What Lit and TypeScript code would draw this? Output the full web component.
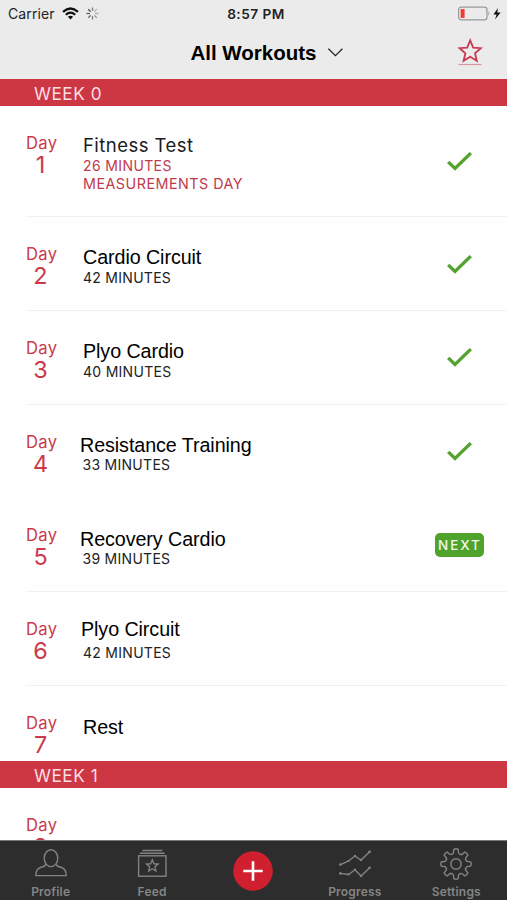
import { LitElement, html, css, svg, nothing } from "lit";
import { customElement, property } from "lit/decorators.js";
import { classMap } from "lit/directives/class-map.js";

type Workout = { day: number; title: string; lines: string[]; kind?: string; state?: "done" | "next" };

const WEEK_0: Workout[] = [
  { day: 1, title: "Fitness Test", lines: ["26 MINUTES", "MEASUREMENTS DAY"], kind: "test", state: "done" },
  { day: 2, title: "Cardio Circuit", lines: ["42 MINUTES"], state: "done" },
  { day: 3, title: "Plyo Cardio", lines: ["40 MINUTES"], state: "done" },
  { day: 4, title: "Resistance Training", lines: ["33 MINUTES"], kind: "wide", state: "done" },
  { day: 5, title: "Recovery Cardio", lines: ["39 MINUTES"], kind: "wide", state: "next" },
  { day: 6, title: "Plyo Circuit", lines: ["42 MINUTES"], kind: "high" },
  { day: 7, title: "Rest", lines: [], kind: "rest" },
];

const STAR = "M12 1.8 L15 9 L22.6 9.6 L16.8 14.6 L18.6 22.2 L12 18.1 L5.4 22.2 L7.2 14.6 L1.4 9.6 L9 9 Z";

function gearPath(): string {
  const pts: string[] = [];
  const teeth = 8;
  for (let i = 0; i < teeth; i++) {
    const a = (i * 2 * Math.PI) / teeth - Math.PI / 2;
    const at = (r: number, d: number) => `${(16 + r * Math.cos(a + d)).toFixed(2)} ${(16 + r * Math.sin(a + d)).toFixed(2)}`;
    pts.push(`${i ? "L" : "M"}${at(11.6, -0.22)} L${at(14.8, -0.15)} Q${at(15.8, 0)} ${at(14.8, 0.15)} L${at(11.6, 0.22)} Q${at(9.6, 0.393)} ${at(11.6, 0.565)}`);
  }
  return pts.join(" ") + "Z";
}

@customElement("workout-row")
class WorkoutRow extends LitElement {
  @property({ attribute: false }) item!: Workout;

  static styles = css`
    :host { display: block; height: 93.7px; flex: none; }
    .row { display: grid; grid-template-columns: 31px 1fr 96px; column-gap: 26px; height: 100%; margin-left: 26px; box-sizing: border-box; border-bottom: 1px solid #f1f1f1; }
    .row.plain { border-bottom-color: transparent; }
    .day { display: flex; flex-direction: column; align-items: center; padding-top: 27px; color: #cb3a4b; }
    .word { font-size: 16.6px; line-height: 20px; letter-spacing: 0.3px; margin-right: -0.3px; }
    .num { font-size: 23.4px; line-height: 24px; margin-left: -2px; }
    .body { padding-top: 29px; color: #222; white-space: nowrap; }
    .title { font-family: "Liberation Sans", Arial, sans-serif; font-size: 19.7px; letter-spacing: -0.07px; line-height: 22px; color: #000; }
    .line { font-size: 14px; line-height: 18px; letter-spacing: 0.28px; }
    .normal .title { margin-bottom: 0.7px; }
    .wide .title { margin-left: -3px; }
    .wide .body { padding-top: 29.4px; }
    .wide .line { margin-left: -0.5px; }
    .high .body { padding-top: 26px; }
    .high .title { margin: 0 0 4px -2px; }
    .rest .body { padding-top: 30px; }
    .test .body { padding-top: 28.3px; }
    .test .title { font-family: Inter, sans-serif; font-size: 18.5px; letter-spacing: 0.45px; margin-bottom: 1px; color: #1c1c1c; }
    .test .line { color: #c03a4d; letter-spacing: 0.38px; }
    .test .line + .line { font-size: 14.3px; letter-spacing: 0.5px; }
    .state { display: flex; align-items: center; justify-content: center; }
    .check { width: 27px; height: 22px; }
    .next { width: 49px; height: 24px; border-radius: 5px; background: #4fa32b; color: #f0f8ec; font-size: 13.5px; font-weight: 500; line-height: 24px; text-align: center; letter-spacing: 1.9px; text-indent: 1.9px; }
  `;

  render() {
    const w = this.item;
    return html`<div class=${classMap({ row: true, plain: w.day === 4 || w.day === 7, [w.kind ?? "normal"]: true })}>
      <div class="day"><span class="word">Day</span><span class="num">${w.day}</span></div>
      <div class="body">
        <div class="title">${w.title}</div>
        ${w.lines.map((l) => html`<div class="line">${l}</div>`)}
      </div>
      <div class="state">
        ${w.state === "done"
          ? html`<svg class="check" viewBox="0 0 27 22"><path d="M2.2 11.9 L9 18.5 L24.8 3.1" fill="none" stroke="#55a32f" stroke-width="3.4"/></svg>`
          : w.state === "next" ? html`<span class="next">NEXT</span>` : nothing}
      </div>
    </div>`;
  }
}

@customElement("app-root")
class AppRoot extends LitElement {
  static styles = css`
    :host { display: flex; flex-direction: column; width: 507px; height: 900px; overflow: hidden; background: #fefefe; font-family: Inter, sans-serif; }
    .status { display: grid; grid-template-columns: 1fr auto 1fr; align-items: center; height: 27px; padding: 0 5px 0 8px; background: #ebebeb; color: #222; font-size: 14px; flex: none; }
    .left { display: flex; align-items: center; gap: 7px; }
    .carrier { letter-spacing: 0.1px; }
    .wifi { width: 17px; height: 13px; }
    .spin { width: 13px; height: 13px; }
    .time { font-weight: 600; font-size: 13.7px; letter-spacing: 0.45px; margin-left: 2px; }
    .right { display: flex; align-items: center; justify-content: flex-end; }
    .battery { width: 45px; height: 16px; }
    .nav { display: grid; grid-template-columns: 1fr auto 1fr; align-items: center; height: 51.5px; background: #ebebeb; flex: none; }
    .name { display: flex; align-items: center; gap: 11px; grid-column: 2; padding-left: 27px; }
    .label { font-family: "Liberation Sans", Arial, sans-serif; font-size: 20.5px; font-weight: 700; color: #000; }
    .chev { width: 16px; height: 10px; }
    .fav { justify-self: end; width: 26px; height: 30px; margin-right: 24px; }
    .week { height: 27px; line-height: 29px; padding-left: 34px; background: #cd3744; color: #fbdfe2; font-size: 17.2px; letter-spacing: 0.55px; flex: none; }
    .list { flex: 1; min-height: 0; overflow: hidden; display: flex; flex-direction: column; }
    .first { height: 111.7px; }
    .last { height: 75.3px; overflow: hidden; }
    .tabs { display: grid; grid-template-columns: repeat(5, 1fr); height: 60px; background: #2d2d2d; border-top: 1px solid #777; box-sizing: border-box; flex: none; }
    .tab { display: flex; flex-direction: column; align-items: center; color: #858585; font-size: 12px; font-weight: 600; letter-spacing: 0.2px; line-height: 14px; padding-top: 7px; }
    .tab svg { width: 32px; height: 32px; margin-bottom: 5px; fill: none; stroke: #838383; stroke-width: 1.4; }
    .tab .plus { width: 40px; height: 40px; margin-top: 3px; }
  `;

  render() {
    return html`
      <div class="status">
        <div class="left"><span class="carrier">Carrier</span>
          <svg class="wifi" viewBox="0 0 17 13" fill="none" stroke="#111" stroke-width="2.2"><path d="M1 4.8 Q8.5 -1.8 16 4.8"/><path d="M3.8 7.8 Q8.5 3.6 13.2 7.8"/><path d="M8.5 12.4 L5.9 9.8 Q8.5 7.6 11.1 9.8 Z" fill="#111" stroke="none"/></svg>
          <svg class="spin" viewBox="-6.5 -6.5 13 13" stroke-width="1.3">${[0, 1, 2, 3, 4, 5, 6, 7].map((i) => svg`<path d="M0 -2.6V-6" transform="rotate(${i * 45})" stroke="#333" opacity=${[0.6, 0.3, 0.35, 0.45, 0.6, 0.7, 0.8, 0.9][i]}/>`)}</svg>
        </div>
        <span class="time">8:57 PM</span>
        <div class="right"><svg class="battery" viewBox="0 0 45 16"><rect x="1.6" y="1.1" width="28.4" height="12.8" rx="2.6" fill="none" stroke="#999" stroke-width="1.2"/><path d="M31.4 5.1q2 2.4 0 4.8z" fill="#999"/><rect x="3.6" y="3.1" width="4" height="8.8" fill="#ef3a34"/><path d="M41 2 L36.4 8.5 H39.6 L38 13.5 L43.6 6.5 H40.2 Z" fill="#111"/></svg></div>
      </div>
      <div class="nav">
        <div class="name"><span class="label">All Workouts</span><svg class="chev" viewBox="0 0 16 10"><path d="M.4 .7 L7.4 7.7 L14.4 .7" fill="none" stroke="#222" stroke-width="1.3"/></svg></div>
        <svg class="fav" viewBox="0 0 26 30"><path d=${STAR} transform="translate(1.2 .6)" fill="none" stroke="#c93a50" stroke-width="1.8"/><path d="M1.5 26.5H24.5" stroke="#dc93a0" stroke-width="1.2"/></svg>
      </div>
      <div class="list">
        <div class="week">WEEK 0</div>
        ${WEEK_0.map((w, i) => html`<workout-row class=${i === 0 ? "first" : i === 6 ? "last" : ""} .item=${w}></workout-row>`)}
        <div class="week">WEEK 1</div>
        <workout-row .item=${{ day: 8, title: "", lines: [] }}></workout-row>
      </div>
      <div class="tabs">
        <div class="tab"><svg viewBox="0 0 32 32"><ellipse cx="16" cy="10.2" rx="6.8" ry="8.4"/><path d="M10.8 16.2 Q10.2 18.4 6 19.2 Q.8 20.6 .8 27.6 H31.2 Q31.2 20.6 26 19.2 Q21.8 18.4 21.2 16.2"/></svg>Profile</div>
        <div class="tab"><svg viewBox="0 0 32 32"><rect x="2.6" y="7.8" width="27.4" height="20.4"/><path d="M3.9 5.2H28.7M6.4 2.5H26.4"/><path d=${STAR} transform="translate(9.7 10.8) scale(.55)" stroke-width="2.4"/></svg>Feed</div>
        <div class="tab"><svg class="plus" viewBox="0 0 40 40"><circle cx="20" cy="20" r="19.8" fill="#d01f2e" stroke="none"/><path d="M20 10.3V29.7M10.3 20H29.7" stroke="#fff" stroke-width="2.6"/></svg></div>
        <div class="tab"><svg viewBox="0 0 32 32"><path d="M1 16.8 L9.5 13 L16 8 L22 12 L31 3.5"/><path d="M1 25.4 L9.5 26.5 L16 21.8 L22 28 L31 19.6"/><g fill="#838383" stroke="none"><circle cx="1.4" cy="16.6" r="1.3"/><circle cx="9.5" cy="13" r="1.1"/><circle cx="16" cy="8" r="1.2"/><circle cx="22" cy="12" r="1.2"/><circle cx="30.6" cy="3.8" r="1.4"/><circle cx="1.4" cy="25.4" r="1.3"/><circle cx="9.5" cy="26.5" r="1.1"/><circle cx="16" cy="21.8" r="1.2"/><circle cx="22" cy="28" r="1.2"/><circle cx="30.6" cy="19.8" r="1.3"/></g></svg>Progress</div>
        <div class="tab"><svg viewBox="0 0 32 32"><path d=${gearPath()}/><circle cx="16" cy="16" r="5.2"/></svg>Settings</div>
      </div>`;
  }
}
